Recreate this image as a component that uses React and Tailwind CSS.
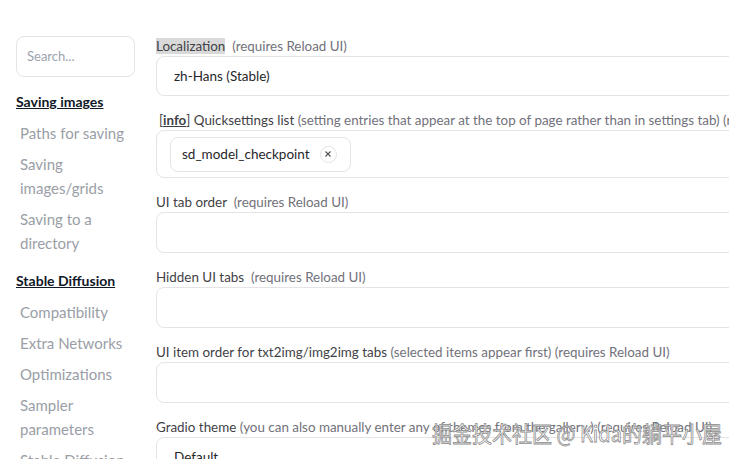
import React from "react";

const font = { fontFamily: "Lato, 'Noto Sans', sans-serif" };

function Label({ label, note, highlight }) {
  return (
    <div className="h-5 text-[13.4px] leading-[20px] text-[#3f3f46] whitespace-pre">
      {highlight ? <span className="bg-[#d9d9d9]">{label}</span> : <span>{label}</span>}
      {note ? <span className="text-[#71717a]">{note}</span> : null}
    </div>
  );
}

function Field({ label, note, highlight, children, h = "h-[41px]" }) {
  return (
    <div className="flex flex-col">
      <Label label={label} note={note} highlight={highlight} />
      <div className={`${h} w-[700px] rounded-lg border border-[#e4e4e7] bg-white flex items-center`}>
        {children}
      </div>
    </div>
  );
}

function SideItem({ children }) {
  return <div className="pl-1 text-[15px] leading-6 text-[#9a9ea6] py-[3.5px]">{children}</div>;
}

export default function App() {
  return (
    <div className="relative w-[729px] h-[459px] overflow-hidden bg-white" style={font}>
      <div className="flex pt-9">
        <div className="w-[119px] ml-4 shrink-0">
          <div className="h-[41px] rounded-lg border border-[#e4e4e7] flex items-center pl-[10px] text-[13px] text-[#9ca3af]">
            Search...
          </div>
          <div className="mt-[15px] text-[14px] font-bold underline text-[#111827] leading-5">Saving images</div>
          <div className="mt-[5px]">
            <SideItem>Paths for saving</SideItem>
            <SideItem>Saving images/grids</SideItem>
            <SideItem>Saving to a directory</SideItem>
          </div>
          <div className="mt-[13px] text-[14px] font-bold underline text-[#111827] leading-5">Stable Diffusion</div>
          <div className="mt-[5px]">
            <SideItem>Compatibility</SideItem>
            <SideItem>Extra Networks</SideItem>
            <SideItem>Optimizations</SideItem>
            <SideItem>Sampler parameters</SideItem>
            <SideItem>Stable Diffusion</SideItem>
          </div>
        </div>
        <div className="ml-[21px] flex flex-col gap-[14px]">
          <Field label="Localization" note="  (requires Reload UI)" highlight h="h-[40px]">
            <span className="pl-[17px] text-[13.5px] text-[#27272a]">zh-Hans (Stable)</span>
          </Field>
          <div className="flex flex-col">
            <div className="h-5 text-[13.4px] leading-[20px] text-[#3f3f46] whitespace-pre pl-[3px]">
              [<span className="font-bold underline">info</span>] Quicksettings list{" "}
              <span className="text-[#71717a]">
                (setting entries that appear at the top of page rather than in settings tab) (requires Reload UI)
              </span>
            </div>
            <div className="h-[48px] w-[700px] rounded-lg border border-[#e4e4e7] bg-white flex items-center pl-[13px]">
              <div className="h-[35px] rounded-lg border border-[#e4e4e7] flex items-center pl-[11px] pr-[13px] gap-[10px] text-[13.5px] text-[#27272a]">
                <span>sd_model_checkpoint</span>
                <span className="w-[17px] h-[17px] rounded-full border border-[#e4e4e7] flex items-center justify-center">
                  <svg width="8" height="8" viewBox="0 0 8 8" stroke="#52525b" strokeWidth="1.1">
                    <path d="M1.5 1.5 L6.5 6.5 M6.5 1.5 L1.5 6.5" />
                  </svg>
                </span>
              </div>
            </div>
          </div>
          <Field label="UI tab order" note="  (requires Reload UI)" />
          <Field label="Hidden UI tabs" note="  (requires Reload UI)" />
          <Field label="UI item order for txt2img/img2img tabs" note=" (selected items appear first) (requires Reload UI)" />
          <Field label="Gradio theme" note=" (you can also manually enter any of themes from the gallery.) (requires Reload UI)">
            <span className="pl-[17px] text-[13.5px] text-[#27272a] self-start pt-[9px]">Default</span>
          </Field>
        </div>
      </div>
      <div
        className="absolute left-[432px] top-[419px] text-[20px] leading-[26px] text-white whitespace-pre [-webkit-text-stroke:0.7px_#8a8a8a] origin-top scale-y-110"
        style={{ fontFamily: "'Noto Sans CJK SC', sans-serif" }}
      >
        掘金技术社区 @ Kida的躺平小屋
      </div>
    </div>
  );
}
